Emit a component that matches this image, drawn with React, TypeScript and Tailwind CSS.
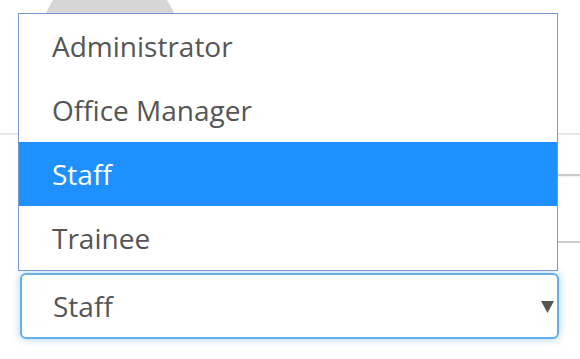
const roles = ['Administrator', 'Office Manager', 'Staff', 'Trainee'];

export default function App() {
  const selected = 'Staff';

  return (
    <div
      className="relative w-[580px] h-[359px] overflow-hidden bg-white"
      style={{ fontFamily: '"Open Sans", "Liberation Sans", sans-serif' }}
    >
      {/* page behind the open menu */}
      <div className="h-[133px] overflow-hidden">
        <div className="ml-[41px] mt-[-30px] w-[138px] h-[138px] rounded-full bg-[#d6d6d6]" />
      </div>
      <div className="border-t-2 border-[#e6e6e6]" />
      <div className="h-[39px]" />
      <div className="ml-[300px] border-t-2 border-[#c9c9c9] shadow-[0_1px_1px_rgba(0,0,0,0.06)]" />
      <div className="h-[65px]" />
      <div className="ml-[300px] border-t-2 border-[#cccccc]" />

      <div className="pl-[20px] pt-[30px]">
        <div className="relative w-[539px] h-[66px] rounded-[6px] border-2 border-[#66afe9] bg-white shadow-[0_0_8px_rgba(102,175,233,0.6)] flex items-center pl-[31px] text-[28px] text-[#555555]">
          {selected}
          <svg
            className="absolute right-[3px] top-[26px]"
            width="13"
            height="12"
            viewBox="0 0 13 12"
          >
            <polygon points="0,0 13,0 6.5,12" fill="#555555" />
          </svg>
        </div>
      </div>

      {/* open option list */}
      <div className="absolute left-[18px] top-[13px] w-[540px] border border-[#7a96d2] bg-white">
        {roles.map((role) => (
          <div
            key={role}
            className={`h-[64px] flex items-center pl-[33px] text-[28px] ${
              role === selected ? 'bg-[#1e90ff] text-white' : 'text-[#555555]'
            }`}
          >
            {role}
          </div>
        ))}
      </div>
    </div>
  );
}
